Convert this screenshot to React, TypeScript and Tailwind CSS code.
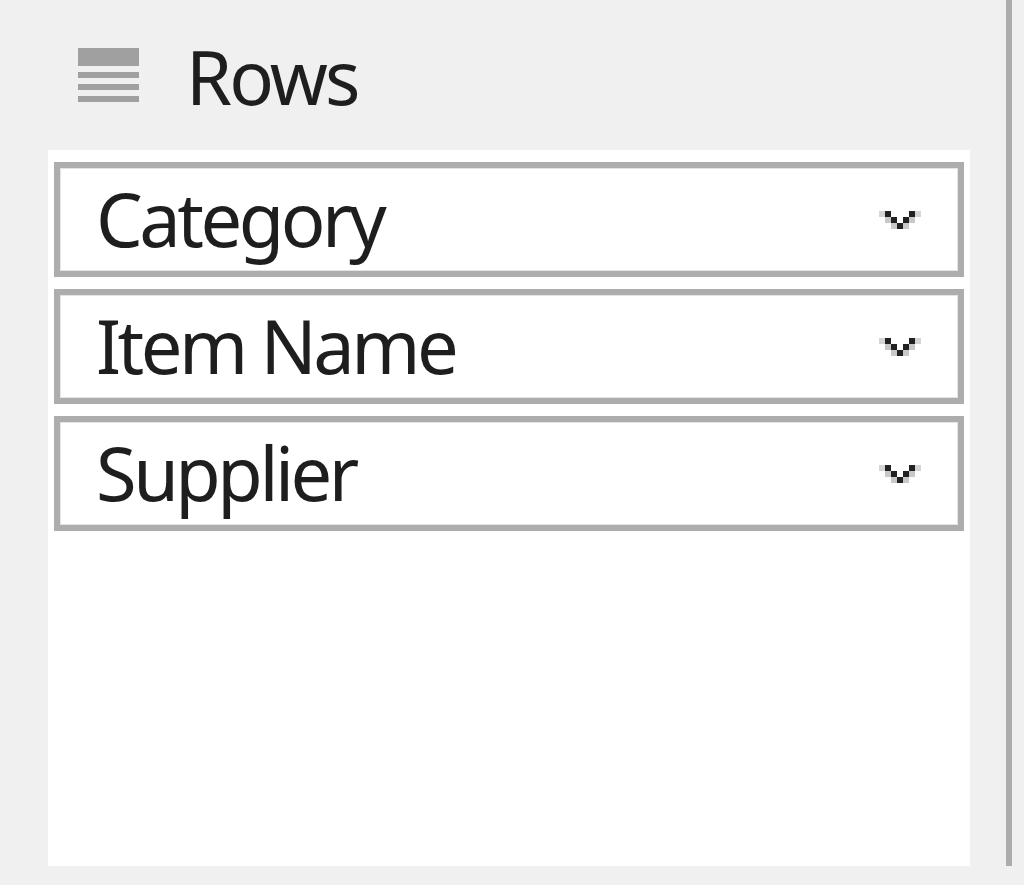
import React from "react";

function Chevron() {
  return (
    <svg width="42" height="18" viewBox="0 0 42 18" shapeRendering="crispEdges" className="shrink-0">
      <rect x="0" y="0" width="6" height="6" fill="#d4d4d4" />
      <rect x="36" y="0" width="6" height="6" fill="#d4d4d4" />
      <rect x="6" y="0" width="6" height="6" fill="#222222" />
      <rect x="30" y="0" width="6" height="6" fill="#222222" />
      <rect x="6" y="6" width="6" height="6" fill="#c8c8c8" />
      <rect x="30" y="6" width="6" height="6" fill="#c8c8c8" />
      <rect x="12" y="6" width="6" height="6" fill="#222222" />
      <rect x="24" y="6" width="6" height="6" fill="#222222" />
      <rect x="12" y="12" width="6" height="6" fill="#c8c8c8" />
      <rect x="24" y="12" width="6" height="6" fill="#c8c8c8" />
      <rect x="18" y="12" width="6" height="6" fill="#222222" />
    </svg>
  );
}

function RowsIcon() {
  return (
    <svg width="61" height="54" viewBox="0 0 61 54" shapeRendering="crispEdges" className="shrink-0">
      <rect x="0" y="0" width="61" height="18" fill="#a0a0a0" />
      <rect x="0" y="24" width="61" height="6" fill="#a0a0a0" />
      <rect x="0" y="36" width="61" height="6" fill="#a0a0a0" />
      <rect x="0" y="48" width="61" height="6" fill="#a0a0a0" />
    </svg>
  );
}

function Field({ label }: { label: string }) {
  return (
    <div className="h-[115px] border-[6px] border-[#adadad] bg-white flex items-center justify-between pl-[36px] pr-[37px] shadow-[inset_0_0_0_1px_#e4e4e4]">
      <span className="text-[74px] leading-none text-[#1e1e1e] tracking-[-3.5px] mt-[-2px]">{label}</span>
      <Chevron />
    </div>
  );
}

export default function App() {
  return (
    <div
      className="w-[1024px] h-[885px] bg-[#f0f0f0] flex overflow-hidden"
      style={{ fontFamily: '"Noto Sans", "Open Sans", sans-serif' }}
    >
      <div className="w-[958px] ml-[48px] flex flex-col">
        <div className="h-[150px] flex items-start pt-[48px] pl-[30px]">
          <RowsIcon />
          <span className="ml-[47px] mt-[-8px] text-[74px] leading-none text-[#1e1e1e] tracking-[-2.8px]">Rows</span>
        </div>
        <div className="w-[922px] h-[716px] bg-white px-[6px] pt-[12px] flex flex-col gap-[12px]">
          <Field label="Category" />
          <Field label="Item Name" />
          <Field label="Supplier" />
        </div>
      </div>
      <div className="w-[6px] h-[866px] bg-[#acacac]" />
    </div>
  );
}
